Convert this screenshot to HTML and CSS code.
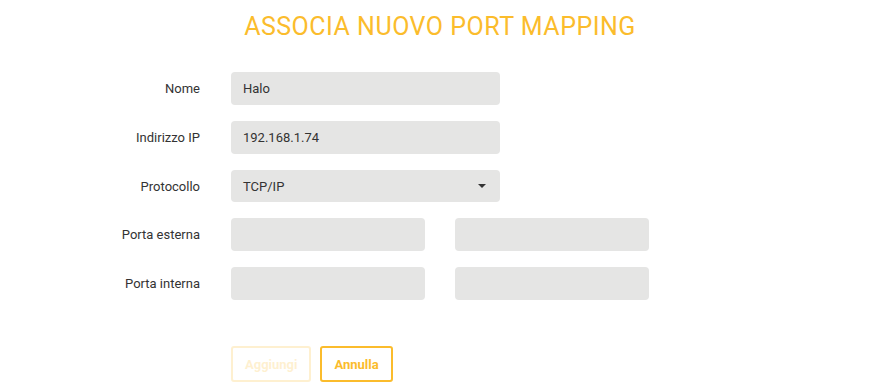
FILE: index.html
```html
<!DOCTYPE html>
<html lang="it">
<head>
    <meta charset="UTF-8">
    <meta name="viewport" content="width=device-width, initial-scale=1.0">
    <title>Associa nuovo port mapping</title>
    <link rel="stylesheet" href="styles.css">
</head>
<body>
    <div class="container">
        <h1>Associa nuovo port mapping</h1>

        <form class="mapping-form">
            <div class="form-row">
                <label for="nome">Nome</label>
                <input type="text" id="nome" value="Halo">
            </div>

            <div class="form-row">
                <label for="ip">Indirizzo IP</label>
                <input type="text" id="ip" value="192.168.1.74">
            </div>

            <div class="form-row">
                <label for="protocollo">Protocollo</label>
                <div class="select-box">
                    <span>TCP/IP</span>
                    <span class="caret"></span>
                </div>
            </div>

            <div class="form-row">
                <label for="esternaDa">Porta esterna</label>
                <div class="port-pair">
                    <input type="text" id="esternaDa">
                    <input type="text" id="esternaA">
                </div>
            </div>

            <div class="form-row">
                <label for="internaDa">Porta interna</label>
                <div class="port-pair">
                    <input type="text" id="internaDa">
                    <input type="text" id="internaA">
                </div>
            </div>

            <div class="form-actions">
                <button type="button" class="btn" disabled>Aggiungi</button>
                <button type="button" class="btn">Annulla</button>
            </div>
        </form>
    </div>
</body>
</html>
```

FILE: styles.css
```css
* {
    margin: 0;
    padding: 0;
    box-sizing: border-box;
}

body {
    font-family: Roboto, 'Noto Sans', sans-serif;
    background: #fff;
    color: #333;
}

.container {
    width: 880px;
    padding-top: 13px;
}

h1 {
    text-align: center;
    color: #fbbc2c;
    font-weight: 400;
    font-size: 25px;
    line-height: 28px;
    letter-spacing: 0.5px;
    text-transform: uppercase;
    margin-bottom: 31px;
}

.mapping-form {
    display: grid;
    gap: 16px;
}

.form-row {
    display: grid;
    grid-template-columns: 200px auto;
    column-gap: 31px;
    align-items: center;
}

label {
    text-align: right;
    font-size: 13px;
    color: #333;
}

input[type="text"],
.select-box {
    width: 269px;
    height: 33px;
    border: none;
    border-radius: 4px;
    background: #e5e5e4;
    padding: 0 12px;
    font-family: inherit;
    font-size: 13px;
    color: #333;
    outline: none;
}

.select-box {
    display: flex;
    align-items: center;
    justify-content: space-between;
    height: 32px;
}

.caret {
    width: 0;
    height: 0;
    border-left: 4px solid transparent;
    border-right: 4px solid transparent;
    border-top: 4px solid #333;
    margin-right: 2px;
}

.port-pair {
    display: flex;
    gap: 30px;
}

.port-pair input[type="text"] {
    width: 194px;
}

.form-actions {
    display: flex;
    gap: 9px;
    margin-top: 30px;
    padding-left: 231px;
}

.btn {
    height: 36px;
    padding: 0 12px;
    background: #fff;
    border: 2px solid #fbbc2c;
    border-radius: 3px;
    color: #fbbc2c;
    font-family: inherit;
    font-weight: 700;
    font-size: 13px;
    cursor: pointer;
}

.btn:disabled {
    opacity: 0.22;
    cursor: default;
}
```
